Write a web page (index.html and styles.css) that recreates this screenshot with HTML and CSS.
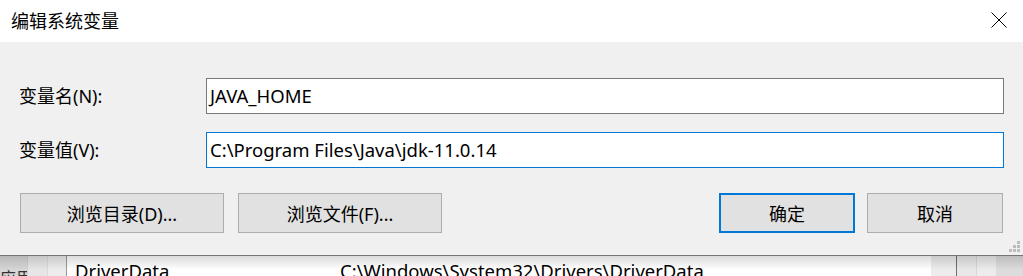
FILE: index.html
```html
<!DOCTYPE html>
<html lang="zh-CN">
<head>
    <meta charset="UTF-8">
    <title>编辑系统变量</title>
    <link rel="stylesheet" href="styles.css">
</head>
<body>
    <div class="dialog">
        <div class="titlebar">
            <span class="title">编辑系统变量</span>
            <span class="close">
                <svg width="16" height="16" viewBox="0 0 16 16">
                    <path d="M0.5 0.5 L15.5 15.5 M15.5 0.5 L0.5 15.5" stroke="#000" stroke-width="1" fill="none"/>
                </svg>
            </span>
        </div>

        <div class="content">
            <div class="field-row">
                <div class="label">变量名(N):</div>
                <div class="field">JAVA_HOME</div>
            </div>
            <div class="field-row">
                <div class="label">变量值(V):</div>
                <div class="field focused">C:\Program Files\Java\jdk-11.0.14</div>
            </div>

            <div class="actions">
                <div class="group browse">
                    <div class="btn wide">浏览目录(D)...</div>
                    <div class="btn wide">浏览文件(F)...</div>
                </div>
                <div class="group confirm">
                    <div class="btn default">确定</div>
                    <div class="btn">取消</div>
                </div>
            </div>

            <!-- resize grip -->
            <svg class="grip" width="12" height="12" viewBox="0 0 12 12">
                <rect x="8" y="0" width="3" height="3" fill="#bdbdbd"/>
                <rect x="4" y="4" width="3" height="3" fill="#bdbdbd"/>
                <rect x="8" y="4" width="3" height="3" fill="#bdbdbd"/>
                <rect x="0" y="8" width="3" height="3" fill="#bdbdbd"/>
                <rect x="4" y="8" width="3" height="3" fill="#bdbdbd"/>
                <rect x="8" y="8" width="3" height="3" fill="#bdbdbd"/>
            </svg>
        </div>
    </div>

    <!-- window underneath the dialog -->
    <div class="behind">
        <div class="side-a">应用</div>
        <div class="side-b"></div>
        <div class="side-c"></div>
        <div class="list">
            <span class="col-name">DriverData</span>
            <span class="col-value">C:\Windows\System32\Drivers\DriverData</span>
        </div>
        <div class="scroll-a"></div>
        <div class="scroll-b"></div>
        <div class="scroll-c"></div>
        <div class="edge"></div>
    </div>
</body>
</html>
```

FILE: styles.css
```css
* {
    box-sizing: border-box;
    margin: 0;
    padding: 0;
}

body {
    width: 1023px;
    height: 276px;
    overflow: hidden;
    background: #fff;
    font-family: "Noto Sans", "Noto Sans CJK SC", sans-serif;
    font-size: 18px;
    color: #000;
}

.dialog {
    background: #f0f0f0;
    border-bottom: 1px solid #767676;
}

.titlebar {
    height: 42px;
    background: #fff;
    display: flex;
    align-items: center;
    justify-content: space-between;
    padding: 0 16px 0 11px;
}

.title {
    font-size: 18px;
    line-height: 20px;
}

.close {
    display: flex;
    margin-top: -2px;
}

.content {
    position: relative;
    padding: 36px 19px 22px 19px;
}

.field-row {
    display: flex;
    align-items: center;
    margin-bottom: 18px;
}

.label {
    width: 187px;
    line-height: 20px;
}

.field {
    flex: 1;
    height: 36px;
    border: 1px solid #7a7a7a;
    background: #fff;
    padding: 0 3px;
    font-size: 18.5px;
    line-height: 33px;
    white-space: nowrap;
}

.field.focused {
    border-color: #0078d7;
}

.actions {
    display: flex;
    justify-content: space-between;
    margin-top: 25px;
    padding: 0 1px;
}

.group {
    display: flex;
}

.browse {
    gap: 14px;
}

.confirm {
    gap: 12px;
}

.btn {
    width: 136px;
    height: 40px;
    border: 1px solid #adadad;
    background: #e1e1e1;
    display: flex;
    align-items: center;
    justify-content: center;
}

.btn.wide {
    width: 204px;
}

.btn.default {
    border: 2px solid #0078d7;
}

.grip {
    position: absolute;
    right: 2px;
    bottom: 2px;
}

/* window behind the dialog */
.behind {
    position: relative;
    height: 20px;
    display: flex;
    overflow: hidden;
}

.behind::after {
    content: "";
    position: absolute;
    left: 0;
    right: 0;
    top: 0;
    height: 14px;
    background: linear-gradient(rgba(0, 0, 0, 0.14), rgba(0, 0, 0, 0));
}

.side-a {
    width: 27px;
    background: #d6d6d6;
    color: #333;
    font-size: 16px;
    line-height: 16px;
    padding-top: 14px;
    white-space: nowrap;
    overflow: hidden;
}

.side-b {
    width: 20px;
    background: #e6e6e6;
    border-left: 1px solid #cfcfcf;
}

.side-c {
    width: 20px;
    background: #ececec;
    border-left: 1px solid #dadada;
    border-right: 1px solid #9a9a9a;
}

.list {
    width: 864px;
    background: #fff;
    display: flex;
    padding-top: 4px;
    font-size: 18.5px;
    line-height: 22px;
    white-space: nowrap;
}

.col-name {
    width: 273px;
    padding-left: 8px;
}

.scroll-a {
    width: 26px;
    background: #ececec;
    border-right: 1px solid #6e6e6e;
}

.scroll-b {
    width: 20px;
    background: #e8e8e8;
    border-right: 1px solid #d8d8d8;
}

.scroll-c {
    width: 19px;
    background: #ececec;
}

.edge {
    flex: 1;
    background: #dcdcdc;
}
```
